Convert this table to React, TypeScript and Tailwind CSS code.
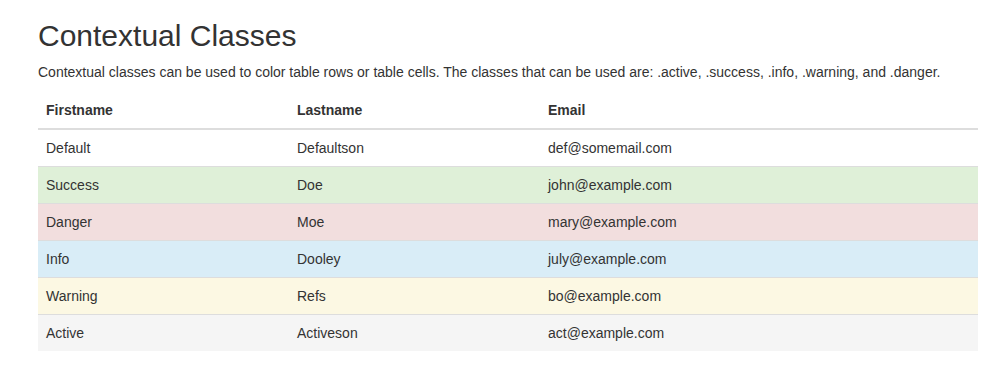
const rows = [
  { first: 'Default', last: 'Defaultson', email: 'def@somemail.com', bg: 'bg-white' },
  { first: 'Success', last: 'Doe', email: 'john@example.com', bg: 'bg-[#dff0d8]' },
  { first: 'Danger', last: 'Moe', email: 'mary@example.com', bg: 'bg-[#f2dede]' },
  { first: 'Info', last: 'Dooley', email: 'july@example.com', bg: 'bg-[#d9edf7]' },
  { first: 'Warning', last: 'Refs', email: 'bo@example.com', bg: 'bg-[#fcf8e3]' },
  { first: 'Active', last: 'Activeson', email: 'act@example.com', bg: 'bg-[#f5f5f5]' },
];

export default function App() {
  return (
    <div className="min-h-screen bg-white text-[#333] text-[14px] leading-[20px] font-['Liberation_Sans',Arial,sans-serif]">
      <div className="ml-[38px] w-[940px]">
        {/* Heading */}
        <h2 className="pt-[19px] mb-[10px] text-[30px] leading-[33px] font-normal">Contextual Classes</h2>
        <p className="mb-[10px]">
          Contextual classes can be used to color table rows or table cells. The classes that can be used are: .active, .success, .info, .warning, and .danger.
        </p>

        {/* Table */}
        <table className="w-full border-collapse text-left">
          <thead>
            <tr>
              <th className="w-[251px] p-[8px] font-bold border-b-2 border-[#ddd]">Firstname</th>
              <th className="w-[251px] p-[8px] font-bold border-b-2 border-[#ddd]">Lastname</th>
              <th className="p-[8px] font-bold border-b-2 border-[#ddd]">Email</th>
            </tr>
          </thead>
          <tbody>
            {rows.map((row, index) => (
              <tr key={row.first} className={row.bg}>
                <td className={`p-[8px] ${index > 0 ? 'border-t border-[#ddd]' : ''}`}>{row.first}</td>
                <td className={`p-[8px] ${index > 0 ? 'border-t border-[#ddd]' : ''}`}>{row.last}</td>
                <td className={`p-[8px] ${index > 0 ? 'border-t border-[#ddd]' : ''}`}>{row.email}</td>
              </tr>
            ))}
          </tbody>
        </table>
      </div>
    </div>
  );
}
